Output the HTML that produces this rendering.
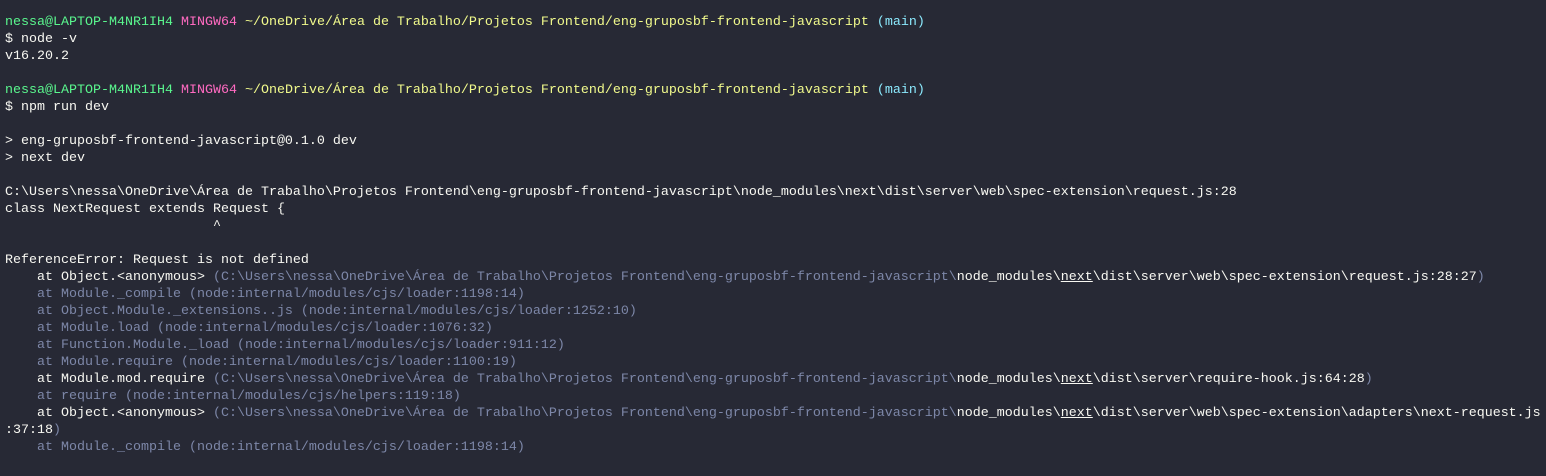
<!DOCTYPE html>
<html><head><meta charset="utf-8"><style>
html,body{margin:0;padding:0;background:#272935;width:1546px;height:476px;overflow:hidden}
pre{margin:0;padding:14px 0 0 5px;font-family:"Liberation Mono",monospace;font-size:13.33px;line-height:17px;color:#f8f8f2;white-space:pre}
.g{color:#5af78e}.m{color:#ff6ac1}.y{color:#f1fa8c}.c{color:#8be9fd}.d{color:#7d87a8}.u{text-decoration:underline}
</style></head><body><pre><span class="g">nessa@LAPTOP-M4NR1IH4</span> <span class="m">MINGW64</span> <span class="y">~/OneDrive/Área de Trabalho/Projetos Frontend/eng-gruposbf-frontend-javascript</span> <span class="c">(main)</span>
$ node -v
v16.20.2

<span class="g">nessa@LAPTOP-M4NR1IH4</span> <span class="m">MINGW64</span> <span class="y">~/OneDrive/Área de Trabalho/Projetos Frontend/eng-gruposbf-frontend-javascript</span> <span class="c">(main)</span>
$ npm run dev

&gt; eng-gruposbf-frontend-javascript@0.1.0 dev
&gt; next dev

C:\Users\nessa\OneDrive\Área de Trabalho\Projetos Frontend\eng-gruposbf-frontend-javascript\node_modules\next\dist\server\web\spec-extension\request.js:28
class NextRequest extends Request {
                          ^

ReferenceError: Request is not defined
    at Object.&lt;anonymous&gt; <span class="d">(C:\Users\nessa\OneDrive\Área de Trabalho\Projetos Frontend\eng-gruposbf-frontend-javascript\</span>node_modules\<span class="u">next</span>\dist\server\web\spec-extension\request.js:28:27<span class="d">)</span>
<span class="d">    at Module._compile (node:internal/modules/cjs/loader:1198:14)</span>
<span class="d">    at Object.Module._extensions..js (node:internal/modules/cjs/loader:1252:10)</span>
<span class="d">    at Module.load (node:internal/modules/cjs/loader:1076:32)</span>
<span class="d">    at Function.Module._load (node:internal/modules/cjs/loader:911:12)</span>
<span class="d">    at Module.require (node:internal/modules/cjs/loader:1100:19)</span>
    at Module.mod.require <span class="d">(C:\Users\nessa\OneDrive\Área de Trabalho\Projetos Frontend\eng-gruposbf-frontend-javascript\</span>node_modules\<span class="u">next</span>\dist\server\require-hook.js:64:28<span class="d">)</span>
<span class="d">    at require (node:internal/modules/cjs/helpers:119:18)</span>
    at Object.&lt;anonymous&gt; <span class="d">(C:\Users\nessa\OneDrive\Área de Trabalho\Projetos Frontend\eng-gruposbf-frontend-javascript\</span>node_modules\<span class="u">next</span>\dist\server\web\spec-extension\adapters\next-request.js
:37:18<span class="d">)</span>
<span class="d">    at Module._compile (node:internal/modules/cjs/loader:1198:14)</span>
</pre></body></html>
